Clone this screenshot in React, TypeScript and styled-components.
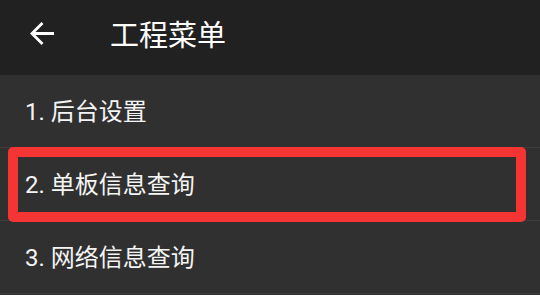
import React from "react";
import styled, { createGlobalStyle } from "styled-components";

const Global = createGlobalStyle`
  html, body { margin: 0; padding: 0; background: #303030; }
  body { font-family: Roboto, "Noto Sans CJK SC", sans-serif; }
`;

const Screen = styled.div`
  width: 540px;
  height: 295px;
  display: flex;
  flex-direction: column;
  background: #303030;
  overflow: hidden;
`;

const Toolbar = styled.header`
  height: 75px;
  flex: none;
  display: flex;
  align-items: center;
  background: #212121;
  padding-left: 29px;
  padding-bottom: 9px;
  box-sizing: border-box;
`;

const BackButton = styled.div`
  width: 26px;
  height: 26px;
  display: flex;
  align-items: center;
  justify-content: center;
`;

const Title = styled.h1`
  margin: 0 0 0 55px;
  font-family: Roboto, "Noto Sans CJK SC", sans-serif;
  font-weight: 400;
  font-size: 29px;
  color: #ffffff;
  letter-spacing: 0;
`;

const List = styled.div`
  display: flex;
  flex-direction: column;
`;

const Row = styled.div`
  position: relative;
  height: 72px;
  display: flex;
  align-items: center;
  padding-left: 25px;
  padding-bottom: 3px;
  box-sizing: content-box;
  height: 69px;
  border-bottom: 1px solid #3c3c3c;
  font-size: 24px;
  color: #f4f4f4;
`;

const Highlight = styled.div`
  position: absolute;
  left: 8px;
  right: 14px;
  top: -1px;
  bottom: -2px;
  border: 10px solid #f53434;
  border-radius: 5px;
  pointer-events: none;
`;

const items = ["1. 后台设置", "2. 单板信息查询", "3. 网络信息查询"];

export default function App() {
  return (
    <>
      <Global />
      <Screen>
        <Toolbar>
          <BackButton>
            <svg width="25" height="25" viewBox="0 0 25 25">
              <path
                d="M24 12.5H3 M12.5 2 L2 12.5 L12.5 23"
                fill="none"
                stroke="#ffffff"
                strokeWidth="2.8"
                strokeLinecap="butt"
                strokeLinejoin="miter"
              />
            </svg>
          </BackButton>
          <Title>工程菜单</Title>
        </Toolbar>
        <List>
          {items.map((t, i) => (
            <Row key={t}>
              {t}
              {i === 1 && <Highlight />}
            </Row>
          ))}
        </List>
      </Screen>
    </>
  );
}
